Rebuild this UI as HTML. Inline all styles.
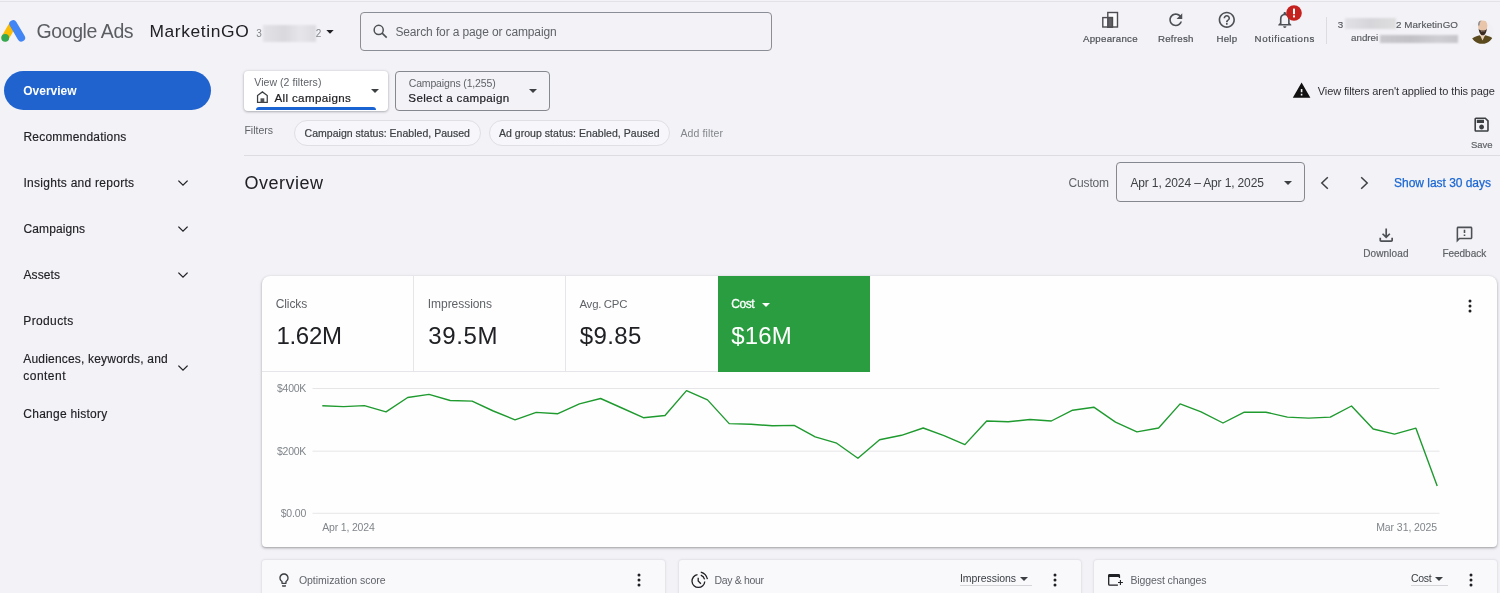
<!DOCTYPE html>
<html lang="en"><head><meta charset="utf-8"><title>Overview - Google Ads</title>
<style>
*{box-sizing:border-box;margin:0;padding:0}
html,body{width:1500px;height:593px;overflow:hidden}
body{background:#f3f2f7;font-family:"Liberation Sans",sans-serif;position:relative;color:#202124}
.abs{position:absolute}
.t{position:absolute;white-space:nowrap;display:block}
svg{position:absolute;overflow:visible}
#topline{left:0;top:0.6px;width:1500px;height:1.2px;background:#e3e2e7}
#search{left:360px;top:11.5px;width:412px;height:39px;border:1px solid #8b8e94;border-radius:4px}
#pill{left:3.5px;top:71px;width:207.5px;height:39px;border-radius:20px;background:#2063ce}
#viewbox{left:244px;top:71px;width:144px;height:39.5px;background:#fff;border-radius:4px;box-shadow:0 1px 2.5px rgba(60,64,67,.32),0 0 3px rgba(60,64,67,.16)}
#viewline{left:256px;top:107.2px;width:120px;height:3.200px;background:#1a63d2;border-radius:3px 3px 0 0}
#campbox{left:394.5px;top:71px;width:155.5px;height:39.5px;border:1px solid #85888e;border-radius:4px}
.chip{height:26px;top:119.6px;border:1px solid #dfdfe4;border-radius:13px;background:#f7f6fa}
#chip1{left:293.5px;width:187.5px}
#chip2{left:488.5px;width:181px}
#divider{left:244px;top:154.5px;width:1256px;height:1px;background:#dddce1}
#datebox{left:1116px;top:162px;width:189px;height:39.500px;border:1px solid #85888e;border-radius:4px}
#vsep{left:1326px;top:17px;width:1px;height:27px;background:#dcdce1}
.blur{filter:blur(1.2px)}
#card{left:262px;top:276px;width:1234.5px;height:270.5px;background:#fefefe;border-radius:8px 8px 4px 4px;box-shadow:0 1px 2px rgba(60,64,67,.35),0 1px 3px 1px rgba(60,64,67,.12)}
#tilesep{left:262px;top:370.8px;width:456px;height:1px;background:#e6e6ea}
.vs{top:276px;width:1px;height:95px;background:#e6e6ea}
#green{left:718px;top:276.4px;width:151.6px;height:95.3px;background:#299d40}
.bcard{top:560px;height:40px;background:#f9f9fc;border-radius:3px 3px 0 0;box-shadow:0 0 2.5px rgba(60,64,67,.22)}
.uline{height:1px;background:#d5d5da;top:585px}
#texts{position:absolute;left:0;top:0;width:1500px;height:593px;will-change:transform}

</style></head><body>
<div class="abs" id="topline"></div>

<!-- Google Ads logo -->
<svg id="logo" style="left:0;top:18px" width="28" height="26" viewBox="0 18 28 26">
  <line x1="5.4" y1="37.4" x2="12.6" y2="24.9" stroke="#fbbc04" stroke-width="7.6" stroke-linecap="round"/>
  <line x1="13.1" y1="23.9" x2="21.3" y2="37.8" stroke="#4285f4" stroke-width="7.6" stroke-linecap="round"/>
  <circle cx="5.2" cy="37.8" r="3.9" fill="#34a853"/>
</svg>

<!-- account id blur -->
<div class="abs blur" style="left:262.500px;top:25.200px;width:53.500px;height:16.500px;background:linear-gradient(90deg,#e3e3e7,#d9d9dd 40%,#e6e6ea 70%,#dcdce0)"></div>
<svg style="left:324.2px;top:26.4px" width="12" height="12" viewBox="6 6 12 12"><path d="M8.3 10.1l3.700 3.700 3.700-3.700z" fill="#202124"/></svg>

<!-- search -->
<div class="abs" id="search"></div>
<svg style="left:370px;top:22px" width="20" height="18" viewBox="370 22 20 18"><circle cx="378.7" cy="29.9" r="4.55" fill="none" stroke="#4d5156" stroke-width="1.5"/><path d="M382.100 33.200L386.700 37.600" stroke="#4d5156" stroke-width="1.600" fill="none"/></svg>

<!-- header icons -->
<svg id="ic-app" style="left:1100px;top:10px" width="20" height="20" viewBox="1100 10 20 20">
  <rect x="1107.8" y="12.5" width="9.7" height="14.5" fill="#fbfbfd" stroke="#4d4d51" stroke-width="1.4"/>
  <rect x="1102.8" y="17.6" width="9.6" height="9.4" fill="#fbfbfd" stroke="#4d4d51" stroke-width="1.4"/>
  <rect x="1107.8" y="17.6" width="4.6" height="9.4" fill="#626266" stroke="#4d4d51" stroke-width="1.4"/>
</svg>
<svg style="left:1166.2px;top:10px" width="19.5" height="19.5" viewBox="0 0 24 24"><path fill="#4d5156" d="M17.65 6.35C16.2 4.9 14.21 4 12 4c-4.42 0-7.99 3.58-7.99 8s3.57 8 7.99 8c3.73 0 6.84-2.55 7.73-6h-2.08c-.82 2.33-3.04 4-5.65 4-3.31 0-6-2.69-6-6s2.69-6 6-6c1.66 0 3.14.69 4.22 1.78L13 11h7V4l-2.35 2.35z"/></svg>
<svg style="left:1217px;top:10px" width="19.6" height="19.6" viewBox="0 0 24 24"><path fill="#4d5156" d="M11 18h2v-2h-2v2zm1-16C6.48 2 2 6.48 2 12s4.480 10 10 10 10-4.48 10-10S17.52 2 12 2zm0 18c-4.410 0-8-3.590-8-8s3.590-8 8-8 8 3.590 8 8-3.590 8-8 8zm0-14c-2.210 0-4 1.790-4 4h2c0-1.100.9-2 2-2s2 .9 2 2c0 2-3 1.750-3 5h2c0-2.250 3-2.500 3-5 0-2.210-1.790-4-4-4z"/></svg>
<svg style="left:1274.8px;top:10px" width="19.6" height="19.6" viewBox="0 0 24 24"><path fill="#4d5156" d="M12 22c1.100 0 2-.9 2-2h-4c0 1.100.9 2 2 2zm6-6v-5c0-3.070-1.630-5.640-4.500-6.320V4c0-.83-.67-1.500-1.500-1.500s-1.500.67-1.500 1.500v.68C7.640 5.360 6 7.920 6 11v5l-2 2v1h16v-1l-2-2zm-2 1H8v-6c0-2.480 1.510-4.500 4-4.500s4 2.020 4 4.500v6z"/></svg>
<svg style="left:1285.6px;top:5.3px" width="16" height="16" viewBox="0 0 16 16"><circle cx="8" cy="8" r="7.8" fill="#c5221f"/><rect x="7" y="3.6" width="2" height="5.6" fill="#fff"/><rect x="7" y="10.4" width="2" height="2" fill="#fff"/></svg>
<div class="abs" id="vsep"></div>

<!-- account blur -->
<div class="abs blur" style="left:1344.5px;top:18px;width:51px;height:10.5px;background:linear-gradient(90deg,#e2e2e6,#d6d6da 50%,#dededf)"></div>
<div class="abs blur" style="left:1380px;top:34.5px;width:78px;height:8px;background:linear-gradient(90deg,#c9c9cd,#c2c2c6 40%,#cfcfd3 75%,#c6c6ca)"></div>

<!-- avatar -->
<svg id="avatar" style="left:1468px;top:18px;filter:blur(0.35px)" width="28" height="28" viewBox="1468 18 28 28">
  <defs><clipPath id="avc"><circle cx="1482.1" cy="32.2" r="11.6"/></clipPath></defs>
  <g clip-path="url(#avc)">
    <rect x="1468" y="18" width="28" height="28" fill="#f1f0f5"/>
    <path d="M1470 46V40.200C1472.500 37.600 1476.500 36 1479.600 35.300L1482.400 37.200L1485.400 35.300C1489 36 1492.500 37.800 1494.500 40.200V46z" fill="#5a4a1e"/>
    <path d="M1479.800 34.500L1482.500 40.400L1485.400 34.500z" fill="#ecd2bd"/>
    <ellipse cx="1482.700" cy="25.800" rx="4.700" ry="6.100" fill="#e9c6aa"/>
    <path d="M1478.100 25.600C1477.700 22.400 1479.400 20 1482 19.800C1480.600 21 1479.600 23 1479.600 25.600z" fill="#8f8e92"/>
    <path d="M1478.600 28.400C1479 32.600 1480.700 35.300 1482.800 35.300S1486.500 32.600 1486.900 28.400C1485.800 30.300 1484.600 30.600 1482.800 30.600S1479.700 30.300 1478.600 28.400z" fill="#3b2a20"/>
    <path d="M1481 31.100C1482 31.900 1483.700 31.900 1484.700 31.100C1484.200 32.300 1481.500 32.300 1481 31.100z" fill="#f6ece6"/>
  </g>
</svg>

<!-- sidebar -->
<div class="abs" id="pill"></div>
<svg class="chev" style="left:177px;top:177.400px" width="12" height="12" viewBox="0 0 12 12"><path d="M1.400 3.600L6 8.200l4.600-4.600" fill="none" stroke="#202124" stroke-width="1.300"/></svg>
<svg class="chev" style="left:177px;top:223.400px" width="12" height="12" viewBox="0 0 12 12"><path d="M1.400 3.600L6 8.200l4.600-4.600" fill="none" stroke="#202124" stroke-width="1.300"/></svg>
<svg class="chev" style="left:177px;top:269.400px" width="12" height="12" viewBox="0 0 12 12"><path d="M1.400 3.600L6 8.200l4.600-4.600" fill="none" stroke="#202124" stroke-width="1.300"/></svg>
<svg class="chev" style="left:177px;top:361.700px" width="12" height="12" viewBox="0 0 12 12"><path d="M1.400 3.600L6 8.200l4.600-4.600" fill="none" stroke="#202124" stroke-width="1.300"/></svg>

<!-- view / campaign selectors -->
<div class="abs" id="viewbox"></div>
<div class="abs" id="viewline"></div>
<svg style="left:255px;top:89px" width="16" height="16" viewBox="255 89 16 16"><path d="M257.550 102.450V95.500L262.400 91.900L267.250 95.500V102.450z" fill="none" stroke="#3c4043" stroke-width="1.250" stroke-linejoin="miter"/><rect x="260.500" y="98.300" width="3.800" height="4.200" fill="#4d5156"/></svg>
<svg style="left:368.600px;top:84.800px" width="12" height="12" viewBox="6 6 12 12"><path d="M8 10l4 4 4-4z" fill="#3c4043"/></svg>
<div class="abs" id="campbox"></div>
<svg style="left:527px;top:84.800px" width="12" height="12" viewBox="6 6 12 12"><path d="M8 10l4 4 4-4z" fill="#3c4043"/></svg>

<!-- warning -->
<svg style="left:1291.700px;top:81.200px" width="19.200" height="19.200" viewBox="0 0 24 24"><path fill="#111" d="M1 21h22L12 2 1 21zm12-3h-2v-2h2v2zm0-4h-2v-4h2v4z"/></svg>

<!-- filter chips -->
<div class="abs chip" id="chip1"></div>
<div class="abs chip" id="chip2"></div>
<svg style="left:1472.300px;top:114.700px" width="19.200" height="19.200" viewBox="0 0 24 24"><path fill="#3c4043" d="M17 3H5c-1.110 0-2 .9-2 2v14c0 1.100.89 2 2 2h14c1.100 0 2-.9 2-2V7l-4-4zm2 16H5V5h11.170L19 7.830V19zm-7-7c-1.660 0-3 1.340-3 3s1.340 3 3 3 3-1.340 3-3-1.340-3-3-3zM6 6h9v4H6z"/></svg>
<div class="abs" id="divider"></div>

<!-- date controls -->
<div class="abs" id="datebox"></div>
<svg style="left:1281.600px;top:176.600px" width="12" height="12" viewBox="6 6 12 12"><path d="M8 10l4 4 4-4z" fill="#3c4043"/></svg>
<svg style="left:1317px;top:174.600px" width="16" height="16" viewBox="0 0 16 16"><path d="M10.800 2.200L4.800 8l6 5.800" fill="none" stroke="#3c4043" stroke-width="1.500"/></svg>
<svg style="left:1356px;top:174.600px" width="16" height="16" viewBox="0 0 16 16"><path d="M5.200 2.200L11.200 8l-6 5.800" fill="none" stroke="#3c4043" stroke-width="1.500"/></svg>

<!-- download / feedback -->
<svg style="left:1375.700px;top:224.800px" width="20.400" height="20.400" viewBox="0 0 24 24"><path fill="#4d5156" d="M18 15v3H6v-3H4v3c0 1.100.9 2 2 2h12c1.100 0 2-.9 2-2v-3h-2zm-1-4l-1.410-1.410L13 12.170V4h-2v8.170L8.410 9.590 7 11l5 5 5-5z"/></svg>
<svg style="left:1454.850px;top:225.400px" width="19" height="19" viewBox="0 0 24 24"><path fill="#4d5156" d="M20 2H4c-1.100 0-1.990.9-1.990 2L2 22l4-4h14c1.100 0 2-.9 2-2V4c0-1.100-.9-2-2-2zm0 14H5.170l-.59.59-.58.58V4h16v12zm-9-4h2v2h-2zm0-6h2v4h-2z"/></svg>

<!-- main card -->
<div class="abs" id="card"></div>
<div class="abs" id="tilesep"></div>
<div class="abs vs" style="left:413px"></div>
<div class="abs vs" style="left:565.200px"></div>
<div class="abs" id="green"></div>
<svg style="left:759.700px;top:298.600px" width="12" height="12" viewBox="6 6 12 12"><path d="M8 10l4 4 4-4z" fill="#fff"/></svg>
<svg style="left:1462px;top:298px" width="16" height="16" viewBox="0 0 16 16"><circle cx="8" cy="3" r="1.500" fill="#202124"/><circle cx="8" cy="8" r="1.500" fill="#202124"/><circle cx="8" cy="13" r="1.500" fill="#202124"/></svg>

<!-- chart -->
<svg id="chart" style="left:262px;top:376px" width="1234" height="150" viewBox="262 376 1234 150">
  <g stroke="#e6e6e9" stroke-width="1">
    <line x1="312.500" y1="388.500" x2="1439.500" y2="388.500"/>
    <line x1="312.500" y1="451.200" x2="1439.500" y2="451.200"/>
    <line x1="312.500" y1="513.300" x2="1439.500" y2="513.300"/>
  </g>
  <polyline fill="none" stroke="#1e9a2e" stroke-width="1.400" stroke-linejoin="round" points="322.300,405.800 343.500,406.600 364.400,405.600 386.000,411.800 407.700,397.500 429.000,394.400 450.200,400.500 472.100,401.100 493.300,411.000 515.000,419.900 536.200,412.400 557.900,413.700 579.400,403.900 600.600,398.500 621.900,408.000 643.400,417.700 665.000,415.500 686.500,390.600 707.500,399.900 729.200,423.600 751.000,424.200 772.300,425.800 794.200,425.400 815.200,436.900 836.700,443.200 857.900,458.200 879.600,439.800 901.500,435.300 923.200,428.000 944.000,435.700 964.900,444.600 986.700,421.000 1008.200,421.800 1030.000,419.500 1051.300,421.000 1072.600,410.200 1093.800,407.200 1115.500,422.200 1136.900,431.900 1158.600,428.000 1180.100,403.900 1201.100,411.800 1223.000,423.000 1244.300,412.200 1265.900,412.200 1287.400,417.100 1308.600,418.100 1330.300,417.100 1351.500,406.000 1373.200,429.000 1394.500,434.100 1415.900,428.200 1437.200,485.900"/>
</svg>

<!-- bottom cards -->
<div class="abs bcard" style="left:262px;width:403px"></div>
<div class="abs bcard" style="left:678.500px;width:402px"></div>
<div class="abs bcard" style="left:1094px;width:403px"></div>
<svg style="left:275.900px;top:572px" width="16" height="16" viewBox="0 0 24 24"><path fill="#3c4043" d="M9 21c0 .55.45 1 1 1h4c.55 0 1-.45 1-1v-1H9v1zm3-19C8.140 2 5 5.140 5 9c0 2.380 1.190 4.470 3 5.740V17c0 .55.45 1 1 1h6c.55 0 1-.45 1-1v-2.260c1.810-1.270 3-3.360 3-5.740 0-3.860-3.140-7-7-7zm2.850 11.100l-.85.6V16h-4v-2.300l-.85-.6C7.800 12.160 7 10.630 7 9c0-2.760 2.240-5 5-5s5 2.240 5 5c0 1.630-.8 3.160-2.150 4.100z"/></svg>
<svg style="left:630.500px;top:571.500px" width="16" height="16" viewBox="0 0 16 16"><circle cx="8" cy="3" r="1.500" fill="#202124"/><circle cx="8" cy="8" r="1.500" fill="#202124"/><circle cx="8" cy="13" r="1.500" fill="#202124"/></svg>

<svg id="ic-dh" style="left:688px;top:570px" width="22" height="22" viewBox="688 570 22 22">
  <g fill="none" stroke="#202124" stroke-width="1.300" stroke-linecap="butt">
    <path d="M697.51 574.66A6.4 6.4 0 1 0 704.78 581.45"/>
    <path d="M700.80 575.07A6.4 6.4 0 0 1 704.58 579.34"/>
    <path d="M700.78 572.11A9.200 9.200 0 0 1 707.43 579.24"/>
    <path d="M698.200 577.800V581L700.900 583.800"/>
  </g>
</svg>
<div class="abs uline" style="left:960px;width:71.500px"></div>
<svg style="left:1018px;top:572.600px" width="12" height="12" viewBox="6 6 12 12"><path d="M8 10l4 4 4-4z" fill="#3c4043"/></svg>
<svg style="left:1046.500px;top:571.500px" width="16" height="16" viewBox="0 0 16 16"><circle cx="8" cy="3" r="1.500" fill="#202124"/><circle cx="8" cy="8" r="1.500" fill="#202124"/><circle cx="8" cy="13" r="1.500" fill="#202124"/></svg>

<svg id="ic-big" style="left:1104px;top:570px" width="22" height="22" viewBox="1104 570 22 22">
  <path d="M1108.700 575.200V584.200Q1108.700 585.200 1109.700 585.200H1117.900" fill="none" stroke="#202124" stroke-width="1.300"/>
  <path d="M1108.050 577V575.400Q1108.050 574 1109.450 574H1118.700Q1120.100 574 1120.100 575.400V578H1118.800V576.900H1108.050z" fill="#202124"/>
  <path d="M1120.400 580.100V585M1118 582.550H1122.900" stroke="#202124" stroke-width="1.100" fill="none"/>
</svg>
<div class="abs uline" style="left:1411px;width:36.500px"></div>
<svg style="left:1433.400px;top:572.600px" width="12" height="12" viewBox="6 6 12 12"><path d="M8 10l4 4 4-4z" fill="#3c4043"/></svg>
<svg style="left:1462.600px;top:571.500px" width="16" height="16" viewBox="0 0 16 16"><circle cx="8" cy="3" r="1.500" fill="#202124"/><circle cx="8" cy="8" r="1.500" fill="#202124"/><circle cx="8" cy="13" r="1.500" fill="#202124"/></svg>

<div id="texts">
<span class="t" id="t-ga" style="left:36.6px;top:17.5px;font-size:19.5px;line-height:27px;color:#5a5d62;font-weight:400;letter-spacing:-0.425px;">Google Ads</span>
<span class="t" id="t-mg" style="left:149.5px;top:19.3px;font-size:17.4px;line-height:24px;color:#202124;font-weight:400;letter-spacing:0.606px;">MarketinGO</span>
<span class="t" id="t-acc3" style="left:256.2px;top:27.3px;font-size:10px;line-height:14px;color:#80868b;font-weight:400;letter-spacing:0.000px;">3</span>
<span class="t" id="t-acc2" style="left:315.8px;top:27.3px;font-size:10px;line-height:14px;color:#80868b;font-weight:400;letter-spacing:0.000px;">2</span>
<span class="t" id="t-srch" style="left:395.4px;top:23.9px;font-size:12px;line-height:17px;color:#5f6368;font-weight:400;letter-spacing:-0.124px;">Search for a page or campaign</span>
<span class="t" id="t-app" style="left:1083.0px;top:31.6px;font-size:9.7px;line-height:14px;color:#4d5156;font-weight:400;letter-spacing:0.261px;-webkit-text-stroke:0.2px #4d5156;">Appearance</span>
<span class="t" id="t-ref" style="left:1157.9px;top:31.6px;font-size:9.7px;line-height:14px;color:#4d5156;font-weight:400;letter-spacing:0.263px;-webkit-text-stroke:0.2px #4d5156;">Refresh</span>
<span class="t" id="t-help" style="left:1216.4px;top:31.6px;font-size:9.7px;line-height:14px;color:#4d5156;font-weight:400;letter-spacing:0.288px;-webkit-text-stroke:0.2px #4d5156;">Help</span>
<span class="t" id="t-notif" style="left:1254.6px;top:31.6px;font-size:9.7px;line-height:14px;color:#4d5156;font-weight:400;letter-spacing:0.585px;-webkit-text-stroke:0.2px #4d5156;">Notifications</span>
<span class="t" id="t-a3" style="left:1337.8px;top:18.3px;font-size:9.8px;line-height:14px;color:#55585d;font-weight:400;letter-spacing:0.000px;-webkit-text-stroke:0.15px #55585d;">3</span>
<span class="t" id="t-a2" style="left:1395.9px;top:18.3px;font-size:9.8px;line-height:14px;color:#55585d;font-weight:400;letter-spacing:0.101px;-webkit-text-stroke:0.15px #55585d;">2 MarketinGO</span>
<span class="t" id="t-and" style="left:1351.0px;top:31.4px;font-size:9.8px;line-height:14px;color:#55585d;font-weight:400;letter-spacing:-0.007px;-webkit-text-stroke:0.15px #55585d;">andrei</span>
<span class="t" id="t-ov" style="left:23.3px;top:82.7px;font-size:12px;line-height:17px;color:#ffffff;font-weight:700;letter-spacing:-0.025px;">Overview</span>
<span class="t" id="t-rec" style="left:23.5px;top:129.0px;font-size:12px;line-height:17px;color:#202124;font-weight:400;letter-spacing:0.196px;-webkit-text-stroke:0.15px #202124;">Recommendations</span>
<span class="t" id="t-ins" style="left:23.5px;top:175.3px;font-size:12px;line-height:17px;color:#202124;font-weight:400;letter-spacing:0.273px;-webkit-text-stroke:0.15px #202124;">Insights and reports</span>
<span class="t" id="t-cam" style="left:23.5px;top:220.9px;font-size:12px;line-height:17px;color:#202124;font-weight:400;letter-spacing:0.100px;-webkit-text-stroke:0.15px #202124;">Campaigns</span>
<span class="t" id="t-ass" style="left:23.5px;top:267.1px;font-size:12px;line-height:17px;color:#202124;font-weight:400;letter-spacing:0.077px;-webkit-text-stroke:0.15px #202124;">Assets</span>
<span class="t" id="t-pro" style="left:23.3px;top:313.3px;font-size:12px;line-height:17px;color:#202124;font-weight:400;letter-spacing:0.363px;-webkit-text-stroke:0.15px #202124;">Products</span>
<span class="t" id="t-aud" style="left:23.3px;top:351.4px;font-size:12px;line-height:17px;color:#202124;font-weight:400;letter-spacing:0.187px;-webkit-text-stroke:0.15px #202124;">Audiences, keywords, and</span>
<span class="t" id="t-con" style="left:23.3px;top:368.2px;font-size:12px;line-height:17px;color:#202124;font-weight:400;letter-spacing:0.471px;-webkit-text-stroke:0.15px #202124;">content</span>
<span class="t" id="t-chh" style="left:23.3px;top:405.8px;font-size:12px;line-height:17px;color:#202124;font-weight:400;letter-spacing:0.252px;-webkit-text-stroke:0.15px #202124;">Change history</span>
<span class="t" id="t-v2f" style="left:254.3px;top:74.9px;font-size:10.5px;line-height:15px;color:#5f6368;font-weight:400;letter-spacing:0.051px;">View (2 filters)</span>
<span class="t" id="t-allc" style="left:274.5px;top:89.5px;font-size:11.6px;line-height:16px;color:#202124;font-weight:400;letter-spacing:0.343px;-webkit-text-stroke:0.2px #202124;">All campaigns</span>
<span class="t" id="t-c1255" style="left:408.7px;top:76.3px;font-size:10.5px;line-height:15px;color:#5f6368;font-weight:400;letter-spacing:-0.144px;">Campaigns (1,255)</span>
<span class="t" id="t-selc" style="left:408.3px;top:90.2px;font-size:11.6px;line-height:16px;color:#202124;font-weight:400;letter-spacing:0.351px;-webkit-text-stroke:0.2px #202124;">Select a campaign</span>
<span class="t" id="t-warn" style="left:1317.8px;top:83.6px;font-size:11px;line-height:15px;color:#303134;font-weight:400;letter-spacing:-0.115px;">View filters aren't applied to this page</span>
<span class="t" id="t-fil" style="left:244.4px;top:123.0px;font-size:10.5px;line-height:15px;color:#5f6368;font-weight:400;letter-spacing:0.001px;">Filters</span>
<span class="t" id="t-ch1" style="left:304.6px;top:125.5px;font-size:10.5px;line-height:15px;color:#3c4043;font-weight:400;letter-spacing:0.022px;-webkit-text-stroke:0.2px #3c4043;">Campaign status: Enabled, Paused</span>
<span class="t" id="t-ch2" style="left:498.9px;top:125.5px;font-size:10.5px;line-height:15px;color:#3c4043;font-weight:400;letter-spacing:0.043px;-webkit-text-stroke:0.2px #3c4043;">Ad group status: Enabled, Paused</span>
<span class="t" id="t-addf" style="left:680.5px;top:125.5px;font-size:10.5px;line-height:15px;color:#80868b;font-weight:400;letter-spacing:0.118px;">Add filter</span>
<span class="t" id="t-save" style="left:1471.0px;top:137.5px;font-size:9.5px;line-height:13px;color:#5f6368;font-weight:400;letter-spacing:-0.019px;-webkit-text-stroke:0.2px #5f6368;">Save</span>
<span class="t" id="t-ovt" style="left:244.6px;top:170.5px;font-size:18px;line-height:25px;color:#202124;font-weight:400;letter-spacing:0.469px;">Overview</span>
<span class="t" id="t-cust" style="left:1068.6px;top:174.8px;font-size:12px;line-height:17px;color:#5f6368;font-weight:400;letter-spacing:-0.169px;">Custom</span>
<span class="t" id="t-date" style="left:1130.4px;top:174.8px;font-size:12px;line-height:17px;color:#3c4043;font-weight:400;letter-spacing:-0.137px;">Apr 1, 2024 – Apr 1, 2025</span>
<span class="t" id="t-last" style="left:1394.1px;top:174.8px;font-size:12px;line-height:17px;color:#1a67d2;font-weight:400;letter-spacing:-0.031px;-webkit-text-stroke:0.25px #1a67d2;">Show last 30 days</span>
<span class="t" id="t-dl" style="left:1363.2px;top:247.1px;font-size:10px;line-height:14px;color:#5f6368;font-weight:400;letter-spacing:0.117px;-webkit-text-stroke:0.2px #5f6368;">Download</span>
<span class="t" id="t-fb" style="left:1442.4px;top:247.1px;font-size:10px;line-height:14px;color:#5f6368;font-weight:400;letter-spacing:-0.017px;-webkit-text-stroke:0.2px #5f6368;">Feedback</span>
<span class="t" id="t-clk" style="left:275.7px;top:295.8px;font-size:12px;line-height:17px;color:#5f6368;font-weight:400;letter-spacing:-0.100px;">Clicks</span>
<span class="t" id="t-clkv" style="left:276.4px;top:319.4px;font-size:24px;line-height:34px;color:#202124;font-weight:400;letter-spacing:-0.276px;">1.62M</span>
<span class="t" id="t-imp" style="left:427.8px;top:295.8px;font-size:12px;line-height:17px;color:#5f6368;font-weight:400;letter-spacing:-0.049px;">Impressions</span>
<span class="t" id="t-impv" style="left:428.2px;top:319.4px;font-size:24px;line-height:34px;color:#202124;font-weight:400;letter-spacing:0.649px;">39.5M</span>
<span class="t" id="t-cpc" style="left:579.4px;top:296.3px;font-size:11.4px;line-height:16px;color:#5f6368;font-weight:400;letter-spacing:-0.172px;word-spacing:-0.6px;">Avg. CPC</span>
<span class="t" id="t-cpcv" style="left:579.8px;top:319.4px;font-size:24px;line-height:34px;color:#202124;font-weight:400;letter-spacing:0.384px;">$9.85</span>
<span class="t" id="t-cost" style="left:731.2px;top:295.8px;font-size:12px;line-height:17px;color:#ffffff;font-weight:400;letter-spacing:-0.396px;-webkit-text-stroke:0.3px #fff;">Cost</span>
<span class="t" id="t-costv" style="left:731.2px;top:319.4px;font-size:24px;line-height:34px;color:#ffffff;font-weight:400;letter-spacing:0.151px;">$16M</span>
<span class="t" id="t-y4" style="left:277.0px;top:381.1px;font-size:10.5px;line-height:15px;color:#80868b;font-weight:400;letter-spacing:-0.269px;">$400K</span>
<span class="t" id="t-y2" style="left:277.0px;top:443.7px;font-size:10.5px;line-height:15px;color:#80868b;font-weight:400;letter-spacing:-0.269px;">$200K</span>
<span class="t" id="t-y0" style="left:280.7px;top:505.9px;font-size:10.5px;line-height:15px;color:#80868b;font-weight:400;letter-spacing:-0.170px;">$0.00</span>
<span class="t" id="t-x0" style="left:322.2px;top:519.7px;font-size:10.5px;line-height:15px;color:#80868b;font-weight:400;letter-spacing:-0.170px;">Apr 1, 2024</span>
<span class="t" id="t-x1" style="left:1376.2px;top:519.7px;font-size:10.5px;line-height:15px;color:#80868b;font-weight:400;letter-spacing:-0.080px;">Mar 31, 2025</span>
<span class="t" id="t-opt" style="left:298.9px;top:572.5px;font-size:10.5px;line-height:15px;color:#5f6368;font-weight:400;letter-spacing:-0.015px;">Optimization score</span>
<span class="t" id="t-dh" style="left:714.6px;top:572.5px;font-size:10.5px;line-height:15px;color:#5f6368;font-weight:400;letter-spacing:-0.337px;">Day &amp; hour</span>
<span class="t" id="t-impd" style="left:960.0px;top:571.1px;font-size:10.5px;line-height:15px;color:#3c4043;font-weight:400;letter-spacing:-0.061px;">Impressions</span>
<span class="t" id="t-big" style="left:1130.4px;top:572.5px;font-size:10.5px;line-height:15px;color:#5f6368;font-weight:400;letter-spacing:-0.103px;">Biggest changes</span>
<span class="t" id="t-costd" style="left:1410.9px;top:571.1px;font-size:10.5px;line-height:15px;color:#3c4043;font-weight:400;letter-spacing:-0.298px;">Cost</span>
</div>
</body></html>
